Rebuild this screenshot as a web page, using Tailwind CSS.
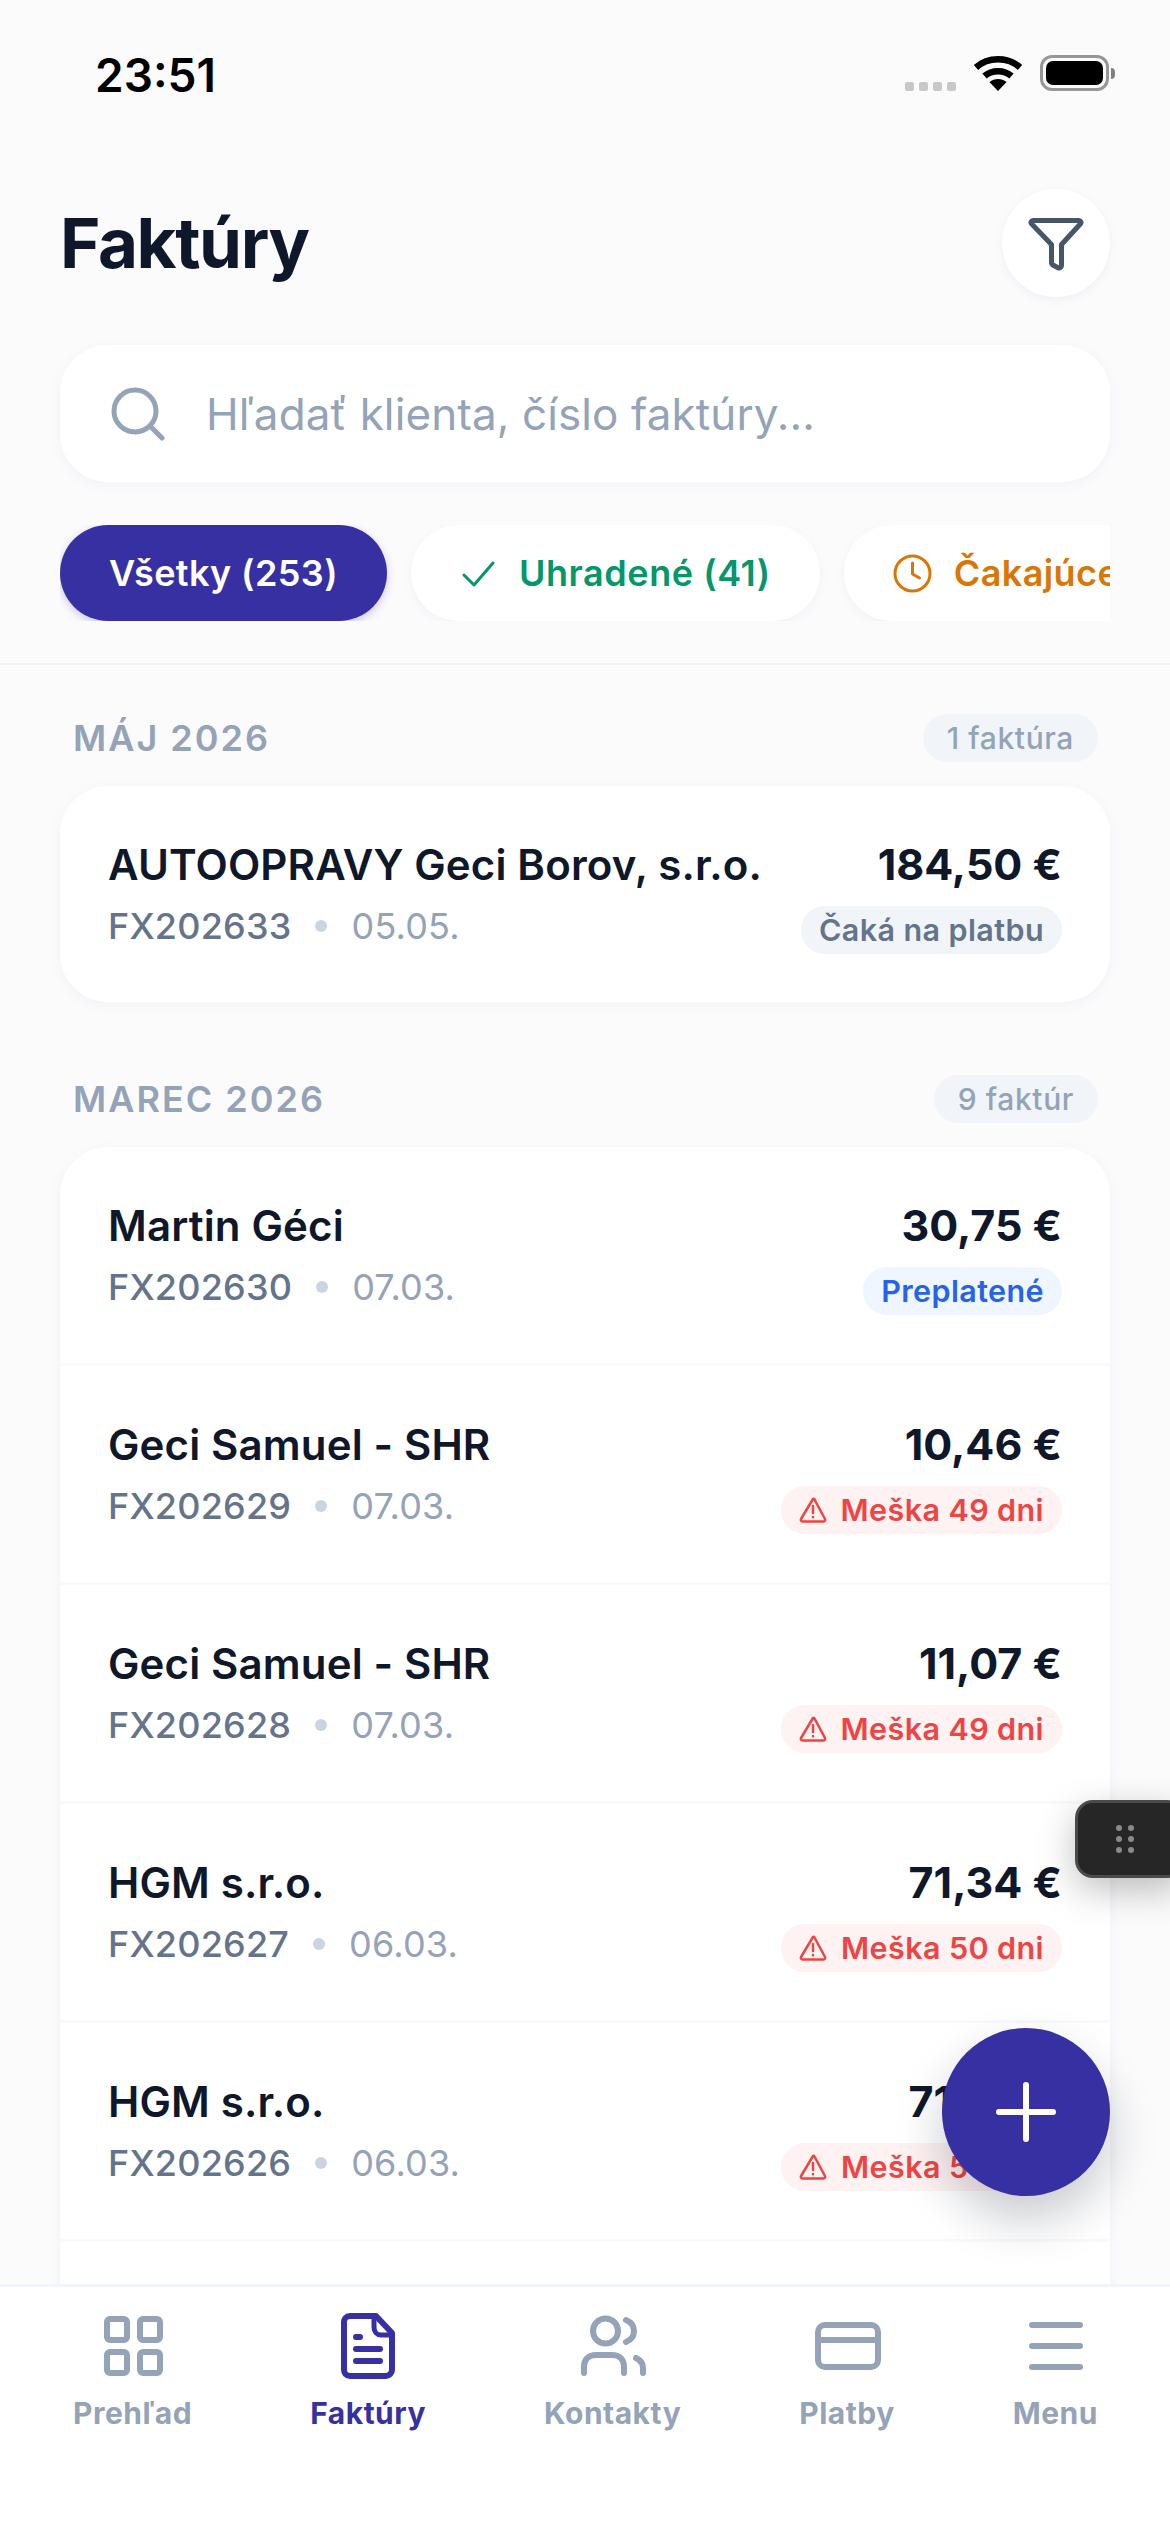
<!DOCTYPE html>
<html lang="sk">
<head>
<meta charset="utf-8">
<title>Faktúry</title>
<script src="https://cdn.jsdelivr.net/npm/@tailwindcss/browser@4"></script>
</head>
<body class="m-0">
<div class="relative w-[1170px] h-[2532px] overflow-hidden flex flex-col bg-[#fbfbfc] font-['Inter',sans-serif] text-[#0f172a]">

  <!-- status bar -->
  <div class="h-[150px] shrink-0 flex items-start justify-between pl-[95px] pr-[55px] pt-[50px]">
    <span class="text-[46px] leading-[50px] font-semibold text-black">23:51</span>
    <div class="flex items-start gap-[17px] pt-[5px]">
      <div class="flex gap-[5px] pt-[27px]">
        <span class="w-[9px] h-[9px] rounded-[2px] bg-[#c8c8c8]"></span>
        <span class="w-[9px] h-[9px] rounded-[2px] bg-[#c8c8c8]"></span>
        <span class="w-[9px] h-[9px] rounded-[2px] bg-[#c8c8c8]"></span>
        <span class="w-[9px] h-[9px] rounded-[2px] bg-[#c8c8c8]"></span>
      </div>
      <svg class="w-[50px] h-[36px]" viewBox="0 0 50 36" fill="none" stroke="#000" stroke-width="6.5">
        <path d="M3 12.5C15 1.5 35 1.500 47 12.500" />
        <path d="M11.500 21C19 14.500 31 14.500 38.500 21" />
        <path d="M25 36l-8.600-9c5-4 12.200-4 17.200 0z" fill="#000" stroke="none"/>
      </svg>
      <div class="flex items-center">
        <div class="w-[69px] h-[36px] rounded-[12px] border-[3px] border-[#979797] p-[3px]">
          <div class="w-full h-full rounded-[7px] bg-black"></div>
        </div>
        <div class="ml-[2px] w-[4px] h-[11px] rounded-r-[4px] bg-[#808080]"></div>
      </div>
    </div>
  </div>

  <!-- header -->
  <div class="shrink-0 px-[60px] border-b-[2px] border-[#f1f5f9] pb-[42px]">
    <div class="flex items-center justify-between pt-[39px]">
      <h1 class="text-[69px] leading-[108px] font-bold tracking-[-1.4px]">Faktúry</h1>
      <button class="w-[108px] h-[108px] rounded-full bg-white shadow-[0_3px_9px_rgba(148,163,184,0.12)] flex items-center justify-center">
        <svg class="w-[60px] h-[60px]" viewBox="0 0 60 60" fill="none" stroke="#475569" stroke-width="5" stroke-linejoin="round" stroke-linecap="round">
          <path d="M7 7.500h46c1.800 0 2.600 2 1.500 3.200L35.500 31.500V52.500c0 2-1.800 3-3.500 2.200L27 52c-1-.5-1.500-1.500-1.500-2.500V31.500L5.500 10.700C4.400 9.500 5.200 7.500 7 7.500z"/>
        </svg>
      </button>
    </div>
    <div class="mt-[48px] h-[137px] rounded-[48px] bg-white shadow-[0_3px_12px_rgba(148,163,184,0.1)] flex items-center pl-[51px] gap-[41px]">
      <svg class="w-[54px] h-[54px] shrink-0" viewBox="0 0 54 54" fill="none" stroke="#94a3b8" stroke-width="5" stroke-linecap="round">
        <circle cx="24" cy="24" r="21"/>
        <path d="M39.500 39.500L51 51"/>
      </svg>
      <span class="text-[44px] leading-[60px] tracking-[0.1px] text-[#94a3b8]">Hľadať klienta, číslo faktúry...</span>
    </div>
    <div class="mt-[43px] flex gap-[24px] overflow-hidden">
      <div class="shrink-0 h-[96px] rounded-full bg-[#3730a3] shadow-[0_3px_9px_rgba(55,48,163,0.25)] px-[49px] flex items-center text-white text-[36px] font-semibold tracking-[0.4px]">Všetky (253)</div>
      <div class="shrink-0 h-[96px] rounded-full bg-white shadow-[0_3px_9px_rgba(148,163,184,0.1)] pl-[51px] pr-[49px] flex items-center gap-[24px] text-[#059669] text-[36px] font-semibold tracking-[0.55px]">
        <svg class="w-[33px] h-[33px]" viewBox="0 0 33 33" fill="none" stroke="#059669" stroke-width="3" stroke-linecap="round" stroke-linejoin="round"><path d="M2 18l10 10L31 6"/></svg>
        <span>Uhradené (41)</span>
      </div>
      <div class="shrink-0 h-[96px] rounded-full bg-white shadow-[0_3px_9px_rgba(148,163,184,0.1)] pl-[49px] pr-[51px] flex items-center gap-[22px] text-[#d97706] text-[36px] font-semibold tracking-[0.4px]">
        <svg class="w-[39px] h-[39px]" viewBox="0 0 39 39" fill="none" stroke="#d97706" stroke-width="3" stroke-linecap="round" stroke-linejoin="round"><circle cx="19.500" cy="19.500" r="17.500"/><path d="M19.500 9v11l7 4"/></svg>
        <span>Čakajúce (212)</span>
      </div>
    </div>
  </div>

  <!-- list -->
  <div class="flex-1 min-h-0 overflow-hidden px-[60px] pt-[49px]">
    <div class="flex items-center justify-between pl-[13px] pr-[12px] h-[48px]">
      <span class="text-[36px] font-semibold tracking-[2px] text-[#94a3b8]">MÁJ 2026</span>
      <span class="h-[48px] px-[24px] rounded-full bg-[#f1f5f9] flex items-center text-[30px] font-medium tracking-[0.6px] text-[#94a3b8]">1 faktúra</span>
    </div>
    <div class="mt-[24px] rounded-[48px] bg-white shadow-[0_3px_12px_rgba(148,163,184,0.1)] px-[48px] py-[48px] flex justify-between h-[216px]">
      <div>
        <div class="text-[42px] leading-[62px] font-semibold tracking-[0.15px]">AUTOOPRAVY Geci Borov, s.r.o.</div>
        <div class="mt-[3px] flex items-center text-[36px] leading-[54px] tracking-[0.2px]"><span class="font-medium text-[#64748b]">FX202633</span><span class="mx-[24px] w-[12px] h-[12px] rounded-full bg-[#cbd5e1]"></span><span class="text-[#94a3b8]">05.05.</span></div>
      </div>
      <div class="flex flex-col items-end">
        <div class="text-[43px] leading-[60px] font-bold">184,50 €</div>
        <span class="mt-[12px] h-[48px] px-[18px] rounded-full bg-[#f1f5f9] flex items-center text-[30.5px] font-semibold tracking-[0.4px] text-[#64748b]">Čaká na platbu</span>
      </div>
    </div>

    <div class="mt-[73px] flex items-center justify-between pl-[13px] pr-[12px] h-[48px]">
      <span class="text-[36px] font-semibold tracking-[2px] text-[#94a3b8]">MAREC 2026</span>
      <span class="h-[48px] px-[24px] rounded-full bg-[#f1f5f9] flex items-center text-[30px] font-medium tracking-[0.6px] text-[#94a3b8]">9 faktúr</span>
    </div>
    <div class="mt-[24px] rounded-[48px] bg-white shadow-[0_3px_12px_rgba(148,163,184,0.1)] flex flex-col">
      <div class="h-[219px] shrink-0 border-b-[3px] border-[#f8fafc] px-[48px] py-[48px] flex justify-between">
        <div>
          <div class="text-[42px] leading-[62px] font-semibold tracking-[0.15px]">Martin Géci</div>
          <div class="mt-[3px] flex items-center text-[36px] leading-[54px] tracking-[0.2px]"><span class="font-medium text-[#64748b]">FX202630</span><span class="mx-[24px] w-[12px] h-[12px] rounded-full bg-[#cbd5e1]"></span><span class="text-[#94a3b8]">07.03.</span></div>
        </div>
        <div class="flex flex-col items-end">
          <div class="text-[43px] leading-[60px] font-bold">30,75 €</div>
          <span class="mt-[12px] h-[48px] px-[18px] rounded-full bg-[#eff6ff] flex items-center text-[30.5px] font-semibold tracking-[0.4px] text-[#2563eb]">Preplatené</span>
        </div>
      </div>
      <div class="h-[219px] shrink-0 border-b-[3px] border-[#f8fafc] px-[48px] py-[48px] flex justify-between">
        <div>
          <div class="text-[42px] leading-[62px] font-semibold tracking-[0.15px]">Geci Samuel - SHR</div>
          <div class="mt-[3px] flex items-center text-[36px] leading-[54px] tracking-[0.2px]"><span class="font-medium text-[#64748b]">FX202629</span><span class="mx-[24px] w-[12px] h-[12px] rounded-full bg-[#cbd5e1]"></span><span class="text-[#94a3b8]">07.03.</span></div>
        </div>
        <div class="flex flex-col items-end">
          <div class="text-[43px] leading-[60px] font-bold">10,46 €</div>
          <span class="mt-[12px] h-[48px] px-[18px] rounded-full bg-[#fef2f2] flex items-center gap-[14px] text-[30.5px] font-semibold tracking-[0.4px] text-[#ef4444]">
            <svg class="w-[28px] h-[26px]" viewBox="0 0 28 26" fill="none" stroke="#ef4444" stroke-width="2.500" stroke-linecap="round" stroke-linejoin="round"><path d="M14 2L2 22c-.6 1.200.2 2.500 1.500 2.500h21c1.300 0 2.100-1.300 1.500-2.500L15.500 2.500c-.6-1-1-1-1.500-.5z"/><path d="M14 9v7M14 20v.2"/></svg>
            <span>Meška 49 dni</span>
          </span>
        </div>
      </div>
      <div class="h-[219px] shrink-0 border-b-[3px] border-[#f8fafc] px-[48px] py-[48px] flex justify-between">
        <div>
          <div class="text-[42px] leading-[62px] font-semibold tracking-[0.15px]">Geci Samuel - SHR</div>
          <div class="mt-[3px] flex items-center text-[36px] leading-[54px] tracking-[0.2px]"><span class="font-medium text-[#64748b]">FX202628</span><span class="mx-[24px] w-[12px] h-[12px] rounded-full bg-[#cbd5e1]"></span><span class="text-[#94a3b8]">07.03.</span></div>
        </div>
        <div class="flex flex-col items-end">
          <div class="text-[43px] leading-[60px] font-bold">11,07 €</div>
          <span class="mt-[12px] h-[48px] px-[18px] rounded-full bg-[#fef2f2] flex items-center gap-[14px] text-[30.5px] font-semibold tracking-[0.4px] text-[#ef4444]">
            <svg class="w-[28px] h-[26px]" viewBox="0 0 28 26" fill="none" stroke="#ef4444" stroke-width="2.500" stroke-linecap="round" stroke-linejoin="round"><path d="M14 2L2 22c-.6 1.200.2 2.500 1.500 2.500h21c1.300 0 2.100-1.300 1.500-2.500L15.500 2.500c-.6-1-1-1-1.500-.5z"/><path d="M14 9v7M14 20v.2"/></svg>
            <span>Meška 49 dni</span>
          </span>
        </div>
      </div>
      <div class="h-[219px] shrink-0 border-b-[3px] border-[#f8fafc] px-[48px] py-[48px] flex justify-between">
        <div>
          <div class="text-[42px] leading-[62px] font-semibold tracking-[0.15px]">HGM s.r.o.</div>
          <div class="mt-[3px] flex items-center text-[36px] leading-[54px] tracking-[0.2px]"><span class="font-medium text-[#64748b]">FX202627</span><span class="mx-[24px] w-[12px] h-[12px] rounded-full bg-[#cbd5e1]"></span><span class="text-[#94a3b8]">06.03.</span></div>
        </div>
        <div class="flex flex-col items-end">
          <div class="text-[43px] leading-[60px] font-bold">71,34 €</div>
          <span class="mt-[12px] h-[48px] px-[18px] rounded-full bg-[#fef2f2] flex items-center gap-[14px] text-[30.5px] font-semibold tracking-[0.4px] text-[#ef4444]">
            <svg class="w-[28px] h-[26px]" viewBox="0 0 28 26" fill="none" stroke="#ef4444" stroke-width="2.500" stroke-linecap="round" stroke-linejoin="round"><path d="M14 2L2 22c-.6 1.200.2 2.500 1.500 2.500h21c1.300 0 2.100-1.300 1.500-2.500L15.500 2.500c-.6-1-1-1-1.500-.5z"/><path d="M14 9v7M14 20v.2"/></svg>
            <span>Meška 50 dni</span>
          </span>
        </div>
      </div>
      <div class="h-[219px] shrink-0 border-b-[3px] border-[#f8fafc] px-[48px] py-[48px] flex justify-between">
        <div>
          <div class="text-[42px] leading-[62px] font-semibold tracking-[0.15px]">HGM s.r.o.</div>
          <div class="mt-[3px] flex items-center text-[36px] leading-[54px] tracking-[0.2px]"><span class="font-medium text-[#64748b]">FX202626</span><span class="mx-[24px] w-[12px] h-[12px] rounded-full bg-[#cbd5e1]"></span><span class="text-[#94a3b8]">06.03.</span></div>
        </div>
        <div class="flex flex-col items-end">
          <div class="text-[43px] leading-[60px] font-bold">71,34 €</div>
          <span class="mt-[12px] h-[48px] px-[18px] rounded-full bg-[#fef2f2] flex items-center gap-[14px] text-[30.5px] font-semibold tracking-[0.4px] text-[#ef4444]">
            <svg class="w-[28px] h-[26px]" viewBox="0 0 28 26" fill="none" stroke="#ef4444" stroke-width="2.500" stroke-linecap="round" stroke-linejoin="round"><path d="M14 2L2 22c-.6 1.200.2 2.500 1.500 2.500h21c1.300 0 2.100-1.300 1.500-2.500L15.500 2.500c-.6-1-1-1-1.500-.5z"/><path d="M14 9v7M14 20v.2"/></svg>
            <span>Meška 50 dni</span>
          </span>
        </div>
      </div>
      <div class="h-[219px] shrink-0"></div>
    </div>
  </div>

  <!-- bottom nav -->
  <nav class="shrink-0 h-[248px] bg-white border-t-[3px] border-[#f1f5f9] pl-[73px] pr-[72px] pt-[28px] flex justify-between items-start text-[30px] leading-[42px] font-bold tracking-[0.5px] text-[#94a3b8]">
    <div class="flex flex-col items-center">
      <svg class="w-[66px] h-[66px]" viewBox="0 0 66 66" fill="none" stroke="#94a3b8" stroke-width="6" stroke-linejoin="round">
        <rect x="7" y="4" width="20" height="21" rx="3"/><rect x="40" y="4" width="20" height="21" rx="3"/><rect x="7" y="37" width="20" height="21" rx="3"/><rect x="40" y="37" width="20" height="21" rx="3"/>
      </svg>
      <span class="mt-[11px]">Prehľad</span>
    </div>
    <div class="flex flex-col items-center text-[#3730a3]">
      <svg class="w-[66px] h-[66px] overflow-visible" viewBox="0 0 66 66" fill="none" stroke="#3730a3" stroke-width="6" stroke-linecap="round" stroke-linejoin="round">
        <path d="M41 1H15c-4 0-6 3-6 6v48c0 3 2 6 6 6h36c3 0 6-3 6-6V18z"/>
        <path d="M39 2v10c0 5 3 8 7 8h10" stroke-width="5"/>
        <path d="M21 22h4M21 34h24M21 46h24"/>
      </svg>
      <span class="mt-[11px]">Faktúry</span>
    </div>
    <div class="flex flex-col items-center">
      <svg class="w-[68px] h-[66px]" viewBox="0 0 68 66" fill="none" stroke="#94a3b8" stroke-width="6" stroke-linecap="round">
        <circle cx="26.500" cy="16" r="12.500"/>
        <path d="M47 5c5 2 8 6 8 11s-3 9-8 11"/>
        <path d="M5 58V52c0-8 5-12 12-12h16c7 0 12 4 12 12v6"/>
        <path d="M57 43c4 2 7 5 7 10v5"/>
      </svg>
      <span class="mt-[11px]">Kontakty</span>
    </div>
    <div class="flex flex-col items-center">
      <svg class="w-[68px] h-[66px]" viewBox="0 0 68 66" fill="none" stroke="#94a3b8" stroke-width="6" stroke-linejoin="round">
        <rect x="5" y="10" width="60" height="42" rx="7"/>
        <path d="M5 25h60"/>
      </svg>
      <span class="mt-[11px]">Platby</span>
    </div>
    <div class="flex flex-col items-center">
      <svg class="w-[66px] h-[66px]" viewBox="0 0 66 66" fill="none" stroke="#94a3b8" stroke-width="6" stroke-linecap="round">
        <path d="M10 10h48M10 31h48M10 52h48"/>
      </svg>
      <span class="mt-[11px]">Menu</span>
    </div>
  </nav>

  <!-- floating action button -->
  <div class="absolute left-[942px] top-[2028px] w-[168px] h-[168px] rounded-full bg-[#3730a3] shadow-[0_24px_48px_rgba(15,23,42,0.22)] flex items-center justify-center">
    <svg class="w-[60px] h-[60px]" viewBox="0 0 60 60" fill="none" stroke="#fff" stroke-width="6" stroke-linecap="round"><path d="M30 3v54M3 30h54"/></svg>
  </div>

  <!-- floating handle -->
  <div class="absolute left-[1075px] top-[1800px] w-[110px] h-[78px] rounded-[18px] bg-[#262626] border-[3px] border-[#4a4a4a] shadow-[0_12px_36px_rgba(0,0,0,0.25)] pl-[38px] flex items-center">
    <div class="grid grid-cols-2 gap-x-[6px] gap-y-[5px]">
      <span class="w-[6px] h-[6px] rounded-full bg-[#8a8a8a]"></span><span class="w-[6px] h-[6px] rounded-full bg-[#8a8a8a]"></span>
      <span class="w-[6px] h-[6px] rounded-full bg-[#8a8a8a]"></span><span class="w-[6px] h-[6px] rounded-full bg-[#8a8a8a]"></span>
      <span class="w-[6px] h-[6px] rounded-full bg-[#8a8a8a]"></span><span class="w-[6px] h-[6px] rounded-full bg-[#8a8a8a]"></span>
    </div>
  </div>
</div>
</body>
</html>
